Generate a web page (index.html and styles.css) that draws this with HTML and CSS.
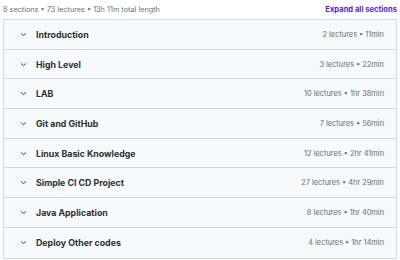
FILE: index.html
```html
<!DOCTYPE html>
<html>
<head>
<meta charset="utf-8">
<link rel="stylesheet" href="styles.css">
</head>
<body>
<div class="page">
  <div class="summary">
    <span class="stats">8 sections • 73 lectures • 13h 11m total length</span>
    <span class="expand">Expand all sections</span>
  </div>
  <div class="sections">
    <div class="row"><svg class="chev" viewBox="0 0 10 6"><path d="M1.5 1.5 L5 4.5 L8.5 1.5"/></svg><span class="title">Introduction</span><span class="meta">2 lectures • 11min</span></div>
    <div class="row"><svg class="chev" viewBox="0 0 10 6"><path d="M1.5 1.5 L5 4.5 L8.5 1.5"/></svg><span class="title">High Level</span><span class="meta">3 lectures • 22min</span></div>
    <div class="row"><svg class="chev" viewBox="0 0 10 6"><path d="M1.5 1.5 L5 4.5 L8.5 1.5"/></svg><span class="title">LAB</span><span class="meta">10 lectures • 1hr 38min</span></div>
    <div class="row"><svg class="chev" viewBox="0 0 10 6"><path d="M1.5 1.5 L5 4.5 L8.5 1.5"/></svg><span class="title">Git and GitHub</span><span class="meta">7 lectures • 56min</span></div>
    <div class="row"><svg class="chev" viewBox="0 0 10 6"><path d="M1.5 1.5 L5 4.5 L8.5 1.5"/></svg><span class="title">Linux Basic Knowledge</span><span class="meta">12 lectures • 2hr 41min</span></div>
    <div class="row"><svg class="chev" viewBox="0 0 10 6"><path d="M1.5 1.5 L5 4.5 L8.5 1.5"/></svg><span class="title">Simple CI CD Project</span><span class="meta">27 lectures • 4hr 29min</span></div>
    <div class="row"><svg class="chev" viewBox="0 0 10 6"><path d="M1.5 1.5 L5 4.5 L8.5 1.5"/></svg><span class="title">Java Application</span><span class="meta">8 lectures • 1hr 40min</span></div>
    <div class="row"><svg class="chev" viewBox="0 0 10 6"><path d="M1.5 1.5 L5 4.5 L8.5 1.5"/></svg><span class="title">Deploy Other codes</span><span class="meta">4 lectures • 1hr 14min</span></div>
  </div>
</div>
</body>
</html>
```
FILE: styles.css
```css
* { box-sizing: border-box; }
html, body { margin: 0; padding: 0; background: #ffffff; }
body { font-family: Inter, "Noto Sans", sans-serif; }
.page { padding: 0 3px 0 3px; width: 400px; }
.summary {
  display: flex;
  justify-content: space-between;
  align-items: center;
  height: 19px;
  padding-bottom: 1px;
}
.stats { font-size: 7.3px; color: #6a6f73; }
.expand { font-size: 7.6px; font-weight: 700; color: #5624d0; }
.sections { border: 1px solid #d1d7dc; }
.row {
  display: flex;
  align-items: center;
  height: 29.7px;
  background: #f7f9fa;
  border-bottom: 1px solid #d1d7dc;
  padding: 0 12px 0 16px;
}
.row:last-child { border-bottom: none; }
.chev { width: 7px; height: 5px; fill: none; stroke: #2d2f31; stroke-width: 1.3; margin-right: 9px; }
.title { font-size: 8.8px; font-weight: 700; color: #2d2f31; flex: 1; }
.meta { font-size: 7.4px; color: #6a6f73; }
```
